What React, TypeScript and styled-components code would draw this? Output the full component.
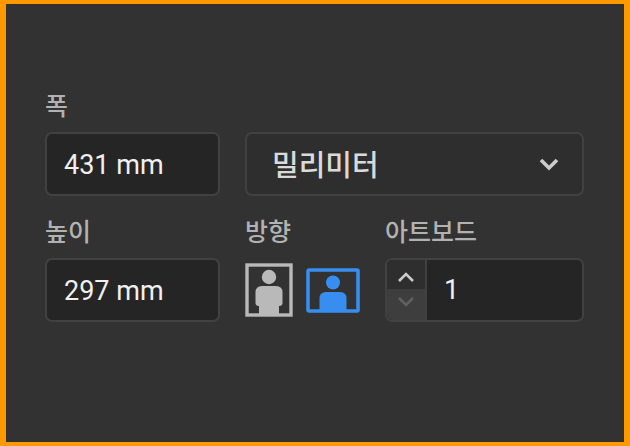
import React, { useState } from 'react';
import styled, { createGlobalStyle } from 'styled-components';

const GlobalStyle = createGlobalStyle`
  *, *::before, *::after {
    box-sizing: border-box;
  }
  body {
    margin: 0;
    background: #ff9900;
    font-family: Roboto, "Noto Sans CJK KR", sans-serif;
  }
`;

const Frame = styled.main`
  display: flex;
  min-height: 100vh;
  padding: 4px 6px;
  background: #ff9900;
`;

const Panel = styled.form`
  flex: 1;
  display: grid;
  grid-template-columns: 175px 115px minmax(0, 1fr);
  align-content: start;
  column-gap: 25px;
  row-gap: 22px;
  padding: 88px 40px 40px 39px;
  background: #323232;
`;

const Field = styled.div<{ $wide?: boolean }>`
  display: flex;
  flex-direction: column;
  justify-content: flex-end;
  gap: 10px;
  min-width: 0;
  grid-column: ${(p) => (p.$wide ? 'span 2' : 'auto')};
`;

const Label = styled.label`
  color: #b2b2b2;
  font-size: 25px;
  font-weight: 500;
  line-height: 30px;
`;

const TextInput = styled.input`
  width: 100%;
  height: 64px;
  padding: 2px 17px 0;
  border: 2px solid #414141;
  border-radius: 7px;
  background: #252525;
  color: #f0f0f0;
  font-family: inherit;
  font-size: 27px;
  outline: none;
`;

const SelectBox = styled.div`
  position: relative;
`;

const Select = styled.select`
  display: block;
  appearance: none;
  width: 100%;
  height: 64px;
  padding: 4px 60px 0 25px;
  border: 2px solid #414141;
  border-radius: 7px;
  background: #2e2e2e;
  color: #dadada;
  font-family: inherit;
  font-size: 29px;
  font-weight: 500;
  outline: none;
`;

const SelectArrow = styled.svg`
  position: absolute;
  top: 24px;
  right: 24px;
  pointer-events: none;
`;

const Orientations = styled.div`
  display: flex;
  align-items: center;
  gap: 13px;
  height: 64px;
`;

const OrientationButton = styled.button<{ $active?: boolean }>`
  display: flex;
  padding: 0;
  border: 0;
  background: none;
  color: ${(p) => (p.$active ? '#378ef0' : '#b9b9b9')};
`;

const Stepper = styled.div`
  display: flex;
  height: 64px;
  border: 2px solid #414141;
  border-radius: 7px;
  background: #252525;
  overflow: hidden;
`;

const StepButtons = styled.div`
  display: grid;
  grid-template-rows: 29px 1fr;
  width: 40px;
  border-right: 2px solid #414141;
`;

const StepButton = styled.button<{ $dim?: boolean; $down?: boolean }>`
  display: flex;
  align-items: center;
  justify-content: center;
  padding: ${(p) => (p.$down ? '0 0 5px' : '7px 0 0')};
  border: 0;
  background: ${(p) => (p.$dim ? '#3e3e3e' : '#2e2e2e')};
  color: ${(p) => (p.$dim ? '#606060' : '#cccccc')};
`;

const StepInput = styled.input`
  flex: 1;
  min-width: 0;
  padding: 0 17px;
  border: 0;
  background: transparent;
  color: #f0f0f0;
  font-family: inherit;
  font-size: 27px;
  outline: none;
`;

function PortraitIcon() {
  return (
    <svg width="48" height="54" viewBox="0 0 48 54" aria-hidden="true">
      <rect x="2" y="2" width="44" height="50" fill="none" stroke="currentColor" strokeWidth="3.4" />
      <circle cx="24" cy="14" r="7.2" fill="currentColor" />
      <path d="M17 23h14q6.500 0 6.500 6.500V40q0 3-3.500 3V51H14V43q-3.500 0-3.500-3V29.500q0-6.500 6.500-6.500z" fill="currentColor" />
    </svg>
  );
}

function LandscapeIcon() {
  return (
    <svg width="54" height="45" viewBox="0 0 54 45" aria-hidden="true">
      <rect x="2" y="2" width="50" height="41" rx="1" fill="none" stroke="currentColor" strokeWidth="3.600" />
      <circle cx="27" cy="14.500" r="7" fill="currentColor" />
      <path d="M20 24h14q6.500 0 6.500 6.500V42H13.500V30.500q0-6.500 6.500-6.500z" fill="currentColor" />
    </svg>
  );
}

function StepIcon({ down }: { down?: boolean }) {
  return (
    <svg width="18" height="12" viewBox="0 0 18 12" aria-hidden="true">
      <path d={down ? 'M2 2l7 7 7-7' : 'M2 9l7-7 7 7'} fill="none" stroke="currentColor" strokeWidth="2.600" />
    </svg>
  );
}

export default function App() {
  const [width, setWidth] = useState('431 mm');
  const [height, setHeight] = useState('297 mm');
  const [landscape, setLandscape] = useState(true);
  const [boards, setBoards] = useState(1);

  return (
    <>
      <GlobalStyle />
      <Frame>
        <Panel onSubmit={(e) => e.preventDefault()}>
          <Field>
            <Label htmlFor="width">폭</Label>
            <TextInput id="width" value={width} onChange={(e) => setWidth(e.target.value)} />
          </Field>
          <Field $wide>
            <SelectBox>
              <Select aria-label="단위" defaultValue="mm">
                <option value="mm">밀리미터</option>
              </Select>
              <SelectArrow width="22" height="16" viewBox="0 0 22 16" aria-hidden="true">
                <path d="M3 4l8 8 8-8" fill="none" stroke="#cccccc" strokeWidth="3.600" />
              </SelectArrow>
            </SelectBox>
          </Field>
          <Field>
            <Label htmlFor="height">높이</Label>
            <TextInput id="height" value={height} onChange={(e) => setHeight(e.target.value)} />
          </Field>
          <Field role="group" aria-labelledby="orientation">
            <Label as="span" id="orientation">방향</Label>
            <Orientations>
              <OrientationButton type="button" aria-label="세로" aria-pressed={!landscape} $active={!landscape} onClick={() => setLandscape(false)}>
                <PortraitIcon />
              </OrientationButton>
              <OrientationButton type="button" aria-label="가로" aria-pressed={landscape} $active={landscape} onClick={() => setLandscape(true)}>
                <LandscapeIcon />
              </OrientationButton>
            </Orientations>
          </Field>
          <Field>
            <Label htmlFor="boards">아트보드</Label>
            <Stepper>
              <StepButtons>
                <StepButton type="button" aria-label="늘리기" onClick={() => setBoards(boards + 1)}>
                  <StepIcon />
                </StepButton>
                <StepButton type="button" aria-label="줄이기" $down $dim={boards === 1} disabled={boards === 1} onClick={() => setBoards(boards - 1)}>
                  <StepIcon down />
                </StepButton>
              </StepButtons>
              <StepInput id="boards" inputMode="numeric" value={boards} onChange={(e) => setBoards(Number(e.target.value) || 1)} />
            </Stepper>
          </Field>
        </Panel>
      </Frame>
    </>
  );
}
